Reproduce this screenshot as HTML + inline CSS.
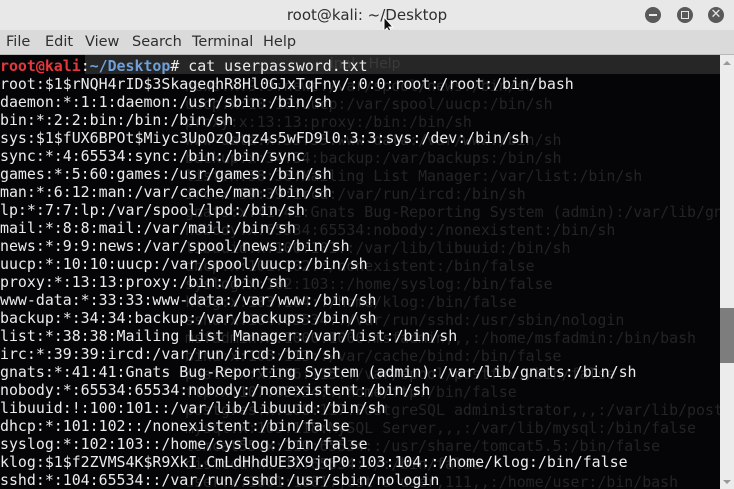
<!DOCTYPE html>
<html><head><style>
body{margin:0;width:734px;height:489px;overflow:hidden;background:#050507;position:relative;font-family:"Liberation Sans","DejaVu Sans",sans-serif}
#title{position:absolute;left:0;top:0;width:734px;height:30px;background:#e8e8e8;}
#title .t{position:absolute;left:0;width:734px;top:6px;text-align:center;font-size:15px;color:#2e2e2e;font-family:"DejaVu Sans",sans-serif}
.btn{position:absolute;top:7px;width:16px;height:16px;border-radius:50%;background:#595959}
#menu{position:absolute;left:0;top:30px;width:734px;height:25px;background:#dadada;border-bottom:1px solid #b8b8b8;box-sizing:border-box}
#menu span{position:absolute;top:4px;font-size:14.5px;color:#2e2e2e;font-family:"DejaVu Sans",sans-serif}
#term{position:absolute;left:0;top:55px;width:720px;height:434px;overflow:hidden}
#band{position:absolute;left:85px;top:0;width:635px;height:19px;background:#262626}
.mono{font-family:"DejaVu Sans Mono","Liberation Mono",monospace;font-size:14.9px;line-height:18px;white-space:pre;position:absolute}
#ghost{left:185px;top:22px;color:#242426}
#main{left:0;top:2px;color:#ececec}
.r{color:#e5383d;font-weight:bold}.b{color:#6f9fd8;font-weight:bold}
#sb{position:absolute;left:720px;top:55px;width:14px;height:434px;background:#ececec}
#thumb{position:absolute;left:720px;top:308px;width:14px;height:55px;background:#7d7d7d}
</style></head><body>
<div id="title"><div class="t">root@kali: ~/Desktop</div>
<div class="btn" style="left:645px"><div style="position:absolute;left:4px;top:7px;width:8px;height:2px;background:#e8e8e8"></div></div>
<div class="btn" style="left:677px"><div style="position:absolute;left:4px;top:4px;width:6px;height:6px;border:1px solid #e8e8e8"></div></div>
<div class="btn" style="left:708px"><div style="position:absolute;left:0;top:-1px;width:16px;text-align:center;color:#e8e8e8;font-size:13px;font-weight:bold">✕</div></div>
<svg style="position:absolute;left:383px;top:16px" width="12" height="18"><path d="M1 1 L1 15 L4 12 L7 17 L9 16 L6 11 L10 11 Z" fill="#111" stroke="#fff" stroke-width="1"/></svg>
</div>
<div id="menu"><span style="left:6px">File</span><span style="left:45px">Edit</span><span style="left:85px">View</span><span style="left:132px">Search</span><span style="left:192px">Terminal</span><span style="left:263px">Help</span></div>
<div id="term">
<div id="band"></div>
<div class="mono" style="left:330px;top:0;color:#3a3a3a;font-family:'DejaVu Sans',sans-serif;font-size:14px">inal   Help</div>
<div id="ghost" class="mono">news:x:9:9:news:/var/spool/news:/bin/sh
uucp:x:10:10:uucp:/var/spool/uucp:/bin/sh
proxy:x:13:13:proxy:/bin:/bin/sh
www-data:x:33:33:www-data:/var/www:/bin/sh
backup:x:34:34:backup:/var/backups:/bin/sh
list:x:38:38:Mailing List Manager:/var/list:/bin/sh
irc:x:39:39:ircd:/var/run/ircd:/bin/sh
gnats:x:41:41:Gnats Bug-Reporting System (admin):/var/lib/gnats:/bin/sh
nobody:x:65534:65534:nobody:/nonexistent:/bin/sh
libuuid:x:100:101::/var/lib/libuuid:/bin/sh
dhcp:x:101:102::/nonexistent:/bin/false
syslog:x:102:103::/home/syslog:/bin/false
klog:x:103:104::/home/klog:/bin/false
sshd:x:104:65534::/var/run/sshd:/usr/sbin/nologin
msfadmin:x:1000:1000:msfadmin,,,:/home/msfadmin:/bin/bash
bind:x:105:113::/var/cache/bind:/bin/false
postfix:x:106:115::/var/spool/postfix:/bin/false
ftp:x:107:65534::/home/ftp:/bin/false
postgres:x:108:117:PostgreSQL administrator,,,:/var/lib/postgresql:/bin/bash
mysql:x:109:118:MySQL Server,,,:/var/lib/mysql:/bin/false
tomcat55:x:110:65534::/usr/share/tomcat5.5:/bin/false
distccd:x:111:65534::/:/bin/false
user:x:1001:1001:just a user,111,,:/home/user:/bin/bash</div>
<div id="main" class="mono"><span class="r">root@kali</span>:<span class="b">~/Desktop</span># cat userpassword.txt
root:$1$rNQH4rID$3SkageqhR8Hl0GJxTqFny/:0:0:root:/root:/bin/bash
daemon:*:1:1:daemon:/usr/sbin:/bin/sh
bin:*:2:2:bin:/bin:/bin/sh
sys:$1$fUX6BPOt$Miyc3UpOzQJqz4s5wFD9l0:3:3:sys:/dev:/bin/sh
sync:*:4:65534:sync:/bin:/bin/sync
games:*:5:60:games:/usr/games:/bin/sh
man:*:6:12:man:/var/cache/man:/bin/sh
lp:*:7:7:lp:/var/spool/lpd:/bin/sh
mail:*:8:8:mail:/var/mail:/bin/sh
news:*:9:9:news:/var/spool/news:/bin/sh
uucp:*:10:10:uucp:/var/spool/uucp:/bin/sh
proxy:*:13:13:proxy:/bin:/bin/sh
www-data:*:33:33:www-data:/var/www:/bin/sh
backup:*:34:34:backup:/var/backups:/bin/sh
list:*:38:38:Mailing List Manager:/var/list:/bin/sh
irc:*:39:39:ircd:/var/run/ircd:/bin/sh
gnats:*:41:41:Gnats Bug-Reporting System (admin):/var/lib/gnats:/bin/sh
nobody:*:65534:65534:nobody:/nonexistent:/bin/sh
libuuid:!:100:101::/var/lib/libuuid:/bin/sh
dhcp:*:101:102::/nonexistent:/bin/false
syslog:*:102:103::/home/syslog:/bin/false
klog:$1$f2ZVMS4K$R9XkI.CmLdHhdUE3X9jqP0:103:104::/home/klog:/bin/false
sshd:*:104:65534::/var/run/sshd:/usr/sbin/nologin</div>
</div>
<div id="sb"></div><div id="thumb"></div>
<div style="position:absolute;left:723px;top:61px;width:0;height:0;border-left:4px solid transparent;border-right:4px solid transparent;border-bottom:4px solid #999"></div>
<div style="position:absolute;left:723px;top:480px;width:0;height:0;border-left:4px solid transparent;border-right:4px solid transparent;border-top:4px solid #999"></div>
</body></html>
